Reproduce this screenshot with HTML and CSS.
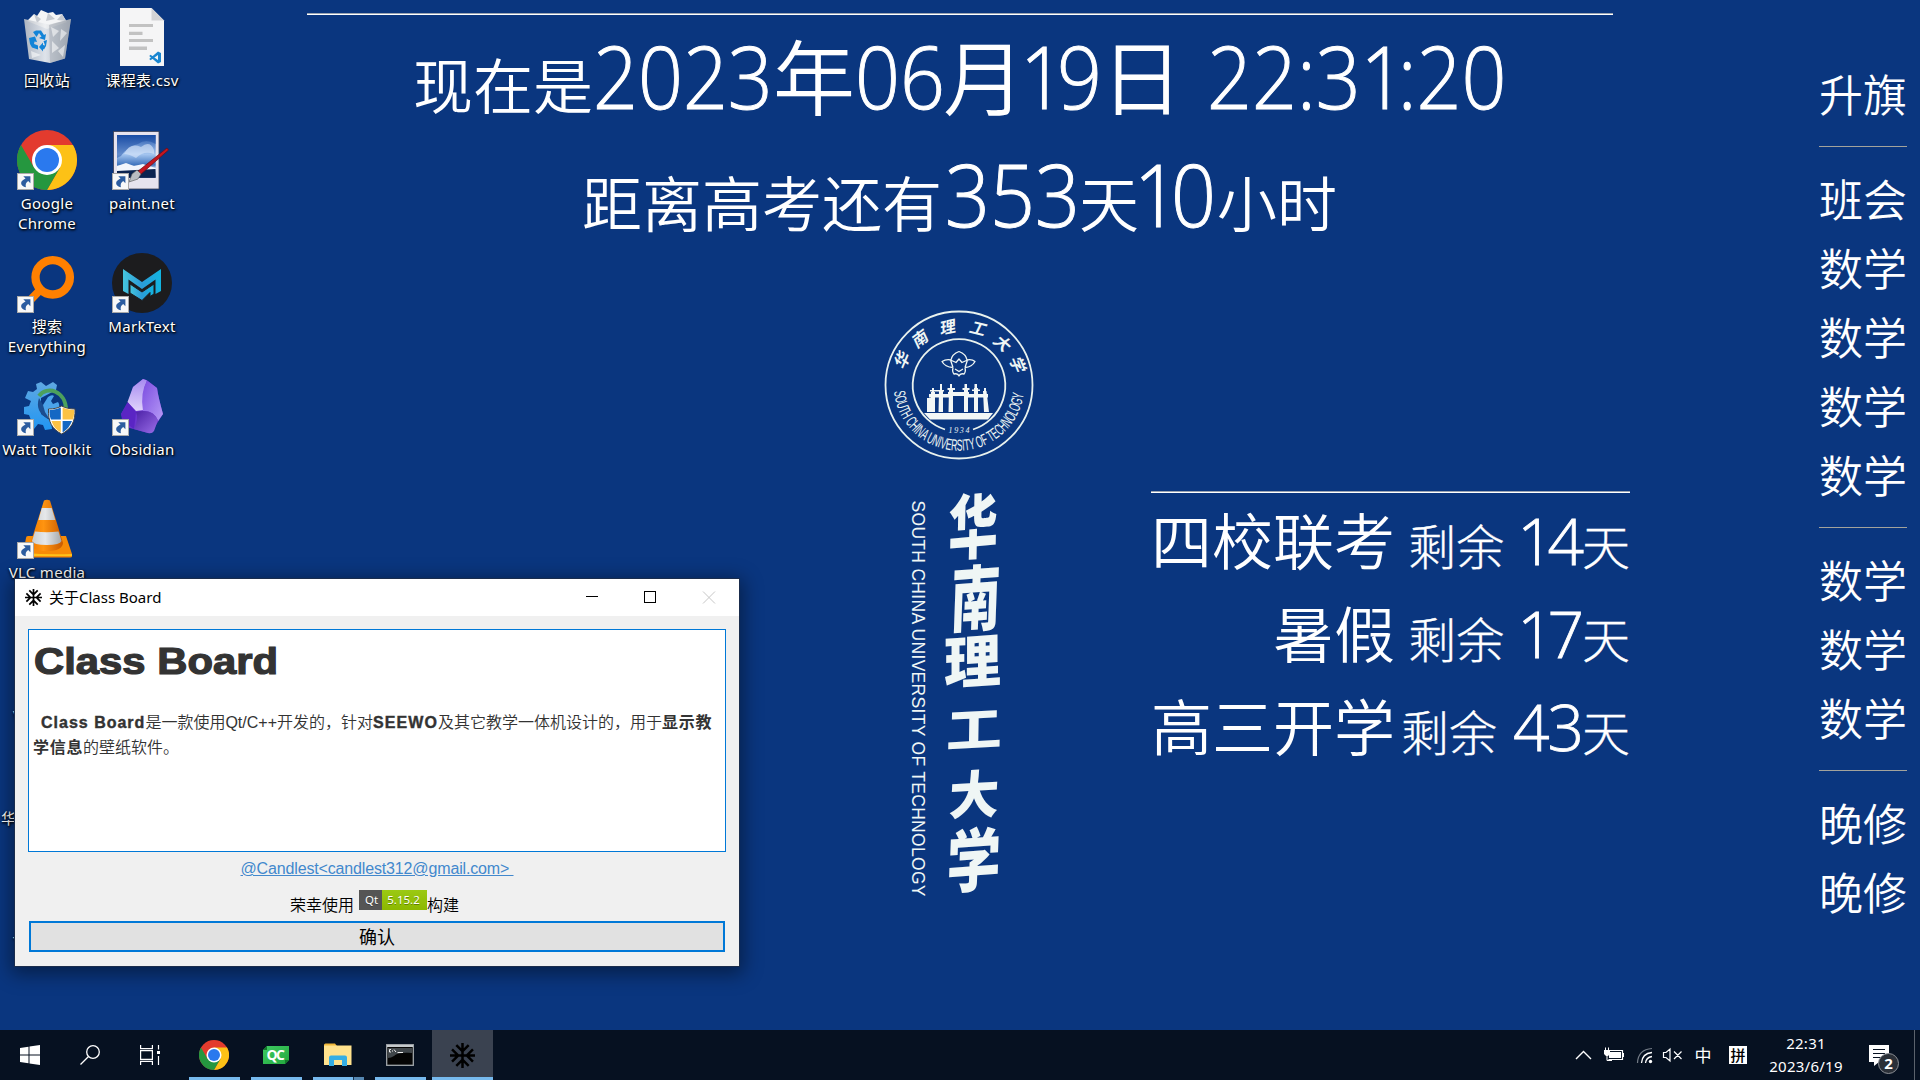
FILE: index.html
```html
<!DOCTYPE html>
<html lang="zh-CN">
<head>
<meta charset="utf-8">
<title>Class Board</title>
<link rel="stylesheet" href="styles.css">
</head>
<body>
<svg class="defs" width="0" height="0" aria-hidden="true">
  <defs>
    <linearGradient id="bin" x1="0" x2="1"><stop offset="0" stop-color="#b9bec6"/><stop offset=".45" stop-color="#eef0f2"/><stop offset="1" stop-color="#a9aeb6"/></linearGradient>
    <linearGradient id="sky" x1="0" y1="0" x2="0" y2="1"><stop offset="0" stop-color="#1c4fa8"/><stop offset=".45" stop-color="#a5c6f0"/><stop offset=".7" stop-color="#3f74bd"/><stop offset=".8" stop-color="#e8eef8"/><stop offset="1" stop-color="#0a2a66"/></linearGradient>
    <linearGradient id="teal" x1="0" x2="1"><stop offset="0" stop-color="#45c5dd"/><stop offset=".5" stop-color="#2b9bd8"/><stop offset="1" stop-color="#12b5e0"/></linearGradient>
    <linearGradient id="gear" x1="0" y1="0" x2="0" y2="1"><stop offset="0" stop-color="#5fa8e2"/><stop offset="1" stop-color="#2196f3"/></linearGradient>
    <linearGradient id="cone" x1="0" x2="1"><stop offset="0" stop-color="#f07a00"/><stop offset=".4" stop-color="#ff9410"/><stop offset="1" stop-color="#c95a00"/></linearGradient>
    <linearGradient id="band" x1="0" x2="1"><stop offset="0" stop-color="#c9cdd0"/><stop offset=".45" stop-color="#e6e8ea"/><stop offset="1" stop-color="#a5a9ac"/></linearGradient>
    <linearGradient id="ob1" x1="0" y1="0" x2="0" y2="1"><stop offset="0" stop-color="#a78bf0"/><stop offset="1" stop-color="#e0d3fb"/></linearGradient>
    <linearGradient id="ob2" x1="0" y1="0" x2="1" y2="1"><stop offset="0" stop-color="#7a4be0"/><stop offset="1" stop-color="#b79bf6"/></linearGradient>
    <linearGradient id="ob3" x1="0" y1="0" x2="1" y2="1"><stop offset="0" stop-color="#4a1fa5"/><stop offset="1" stop-color="#9a6ee8"/></linearGradient>
    <linearGradient id="qt" x1="0" y1="0" x2="1" y2="1"><stop offset="0" stop-color="#3ecb62"/><stop offset="1" stop-color="#23a83e"/></linearGradient>
    <symbol id="shortcut" viewBox="0 0 17 17">
      <rect x=".5" y=".5" width="16" height="16" fill="#f8f8f8" stroke="#a9a9a9"/>
      <path d="M6.300 3.200H13.400V10.200L11.200 8.100C9 9.600 8.200 11.400 8.900 14.200 6.200 13.600 4 12 4.100 9.900 4.300 7.800 6.200 6.800 8.500 5.400Z" fill="#2c5c9f"/>
    </symbol>
    <symbol id="chrome" viewBox="0 0 60 60">
      <circle cx="30" cy="30" r="30" fill="#e33b2e"/>
      <path d="M30 15H56A30 30 0 0 1 30 60L43 37.500Z" fill="#fdc116"/>
      <path d="M4 15A30 30 0 0 0 30 60L43 37.500 30 40 17 37.500Z" fill="#25973f"/>
      <circle cx="30" cy="30" r="15" fill="#fff"/><circle cx="30" cy="30" r="12" fill="#2a79ee"/>
    </symbol>
    <symbol id="flake" viewBox="2 2 20 20">
      <path fill="currentColor" d="M22 11h-4.170l3.240-3.240-1.410-1.420L15 11h-2V9l4.660-4.660-1.420-1.410L13 6.170V2h-2v4.170L7.760 2.930 6.340 4.340 11 9v2H9L4.340 6.340 2.930 7.760 6.170 11H2v2h4.170l-3.240 3.240 1.410 1.420L9 13h2v2l-4.660 4.660 1.420 1.410L11 17.830V22h2v-4.170l3.240 3.240 1.420-1.410L13 15v-2h2l4.660 4.660 1.410-1.420L17.830 13H22z"/>
    </symbol>
  </defs>
</svg>

<div class="screen">
  <main class="desktop">
    <section class="clock">
      <p class="clock-row">
        <span class="word w180">现在是</span><span class="num w180">2023</span><span class="unit w82">年</span><span class="num w88">06</span><span class="unit w77">月</span><span class="num w81"><i>1</i>9</span><span class="unit w106">日</span><span class="num time">22:3<i>1</i>:20</span>
      </p>
      <p class="clock-row second">
        <span class="word w363">距离高考还有</span><span class="num w134">353</span><span class="word w55">天</span><span class="num w83"><i>1</i>0</span><span class="word">小时</span>
      </p>
    </section>

    <svg class="university" width="180" height="610" viewBox="0 0 180 610" fill="none">
      <g stroke="#e9f2ee">
        <circle cx="89" cy="85" r="73.500" stroke-width="1.800"/>
        <path d="M75 129.500A46.300 46.300 0 1 1 103 129.500" stroke-width="1.800"/>
      </g>
      <g class="ring-hanzi">
        <text transform="translate(37 63) rotate(-67) skewX(-12)">华</text>
        <text transform="translate(53 44) rotate(-37) skewX(-12)">南</text>
        <text transform="translate(78 33) rotate(-12) skewX(-12)">理</text>
        <text transform="translate(106 34) rotate(14) skewX(-12)">工</text>
        <text transform="translate(128 47) rotate(42) skewX(-12)">大</text>
        <text transform="translate(142 66) rotate(68) skewX(-12)">学</text>
      </g>
      <path id="ring" d="M24 91.600A65.300 65.300 0 0 0 154 91.600"/>
      <text class="ring-latin"><textPath href="#ring" textLength="190" lengthAdjust="spacingAndGlyphs">SOUTH CHINA UNIVERSITY OF TECHNOLOGY</textPath></text>
      <g stroke="#eef5f2" stroke-width="1.300" stroke-linejoin="round">
        <path d="M81 60Q82 54 89 51.500 96 54 97 60M81 60Q76 59 72 61.500 75 67 83 67.500M97 60Q102 59 105 61.500 102 67 95 67.500M83 67.500Q82 72 84 74 88 73 89 76 90 73 94 74 96 72 95 67.500M83 67.500 80.500 60 86 62.500 89 59 92 62.500 97.500 60 95 67.500M85 69 89 71.500 93 69"/>
      </g>
      <g fill="#f2f7f6">
        <path d="M54 113H123L118 119.500H60Z"/>
        <path d="M61 92H65V112H60ZM69 91H73V112H68.500ZM79 88H83V112H78.500ZM94 88H98V112H94ZM104 88H108V112H104ZM113 91H116.500L119 112H114Z"/>
        <path d="M59 94H83V97.500H59ZM94 94H118V97.500H94ZM78 92H99V96H78ZM60 90H74V91.500H60ZM80 84H82V90H80ZM94.500 84H97V90H94.500ZM104.500 84H107V90H104.500ZM70 84H72V90H70ZM62 88H64V94H62ZM114 88H116V94H114ZM57 98H61V112H57ZM102 89.500H110V91H102ZM77.500 88H85V90H77.500ZM92.500 88H99.500V90H92.500Z"/>
      </g>
      <text class="year" x="78.500" y="132.500" textLength="21">1934</text>
      <text class="brush" transform="translate(78 255) rotate(-5) skewX(-6) scale(.92 1.300)">华</text>
      <text class="brush" transform="translate(80 327) rotate(-4) skewX(-6) scale(.92 1.330)">南</text>
      <text class="brush" transform="translate(74 385) rotate(-4) skewX(-4) scale(1.060 1.060)">理</text>
      <text class="brush" transform="translate(76 448) rotate(-3) skewX(-4) scale(1.030 .86)">工</text>
      <text class="brush" transform="translate(78 515) rotate(-3) skewX(-6) scale(.93 .95)">大</text>
      <text class="brush" transform="translate(76 588) rotate(-4) skewX(-6) scale(1 1.270)">学</text>
      <text class="side-latin" transform="translate(42 200.500) rotate(90)" textLength="396">SOUTH CHINA UNIVERSITY OF TECHNOLOGY</text>
    </svg>

    <section class="exams">
      <p class="exam"><span class="exam-name">四校联考</span><span class="left"><span>剩余</span><b><i>1</i>4</b><span>天</span></span></p>
      <p class="exam"><span class="exam-name">暑假</span><span class="left"><span>剩余</span><b><i>1</i>7</b><span>天</span></span></p>
      <p class="exam"><span class="exam-name">高三开学</span><span class="left"><span>剩余</span><b class="spread">43</b><span>天</span></span></p>
    </section>

    <ol class="lessons">
      <li>升旗</li>
      <li class="break">班会</li><li>数学</li><li>数学</li><li>数学</li><li>数学</li>
      <li class="break">数学</li><li>数学</li><li>数学</li>
      <li class="break">晚修</li><li>晚修</li>
    </ol>

    <div class="icons">
      <figure>
        <svg viewBox="0 0 60 60">
          <path d="M10 14 17 7 20 9 24 3 31 6 36 5 39 8 45 7 50 15 30 22Z" fill="#f4f5f6"/>
          <path d="M17 7 24 12 20 16ZM31 6 29 14 38 12ZM45 7 40 13 49 14Z" fill="#c6cad0"/>
          <path d="M7 12 32 17.500 54 12 48 51.500 33 56 12 52Z" fill="url(#bin)" opacity=".93"/>
          <path d="M32 18 54 12 48 51.500 33 56Z" fill="#9ea4ad" opacity=".45"/>
          <path d="M34 20 42 24 36 30ZM44 22 50 26 43 34ZM35 34 42 41 35 46ZM41 44 48 38 46 50ZM14 44 24 48 15 51Z" fill="#fff" opacity=".55"/>
          <g fill="#1284d8"><path d="M16 25 19 23.500H24L27 28 29 27 28 33 22 31 24.500 29.500 22 26 19.500 30Z"/><path d="M12 31 18 29.500 20 35 17.500 34.500 17 37 21 38.500V42.500L15 40.500 13 37Z"/><path d="M22 40 26 35.500V38L28 38.500 26.500 34 30 33 29 39 27 42.500 26 42V44.500Z"/></g>
        </svg>
        <figcaption>回收站</figcaption>
      </figure>
      <figure>
        <svg viewBox="0 0 60 60"><use href="#chrome" width="60" height="60"/><use href="#shortcut" y="43" width="17" height="17"/></svg>
        <figcaption>Google<br>Chrome</figcaption>
      </figure>
      <figure>
        <svg viewBox="0 0 60 60"><path d="M11 49.500 24 36" stroke="#ff8000" stroke-width="8"/><circle cx="35.700" cy="24.300" r="17.200" fill="none" stroke="#ff8000" stroke-width="8.300"/><use href="#shortcut" y="43" width="17" height="17"/></svg>
        <figcaption>搜索<br>Everything</figcaption>
      </figure>
      <figure>
        <svg viewBox="0 0 60 60">
          <path d="M24 6 29 10 36 6 40 9 39 14 24 22 24 38 34 45 35 53 28 54 26 49 21 48 17 53 12 50 14 44 12 39 7 38 7 31 12 30 14 25 8 22 11 15 16 16 20 13 19 8Z" fill="url(#gear)"/>
          <path d="M22 20C30 9 49 15 49 34" fill="none" stroke="#4ca05c" stroke-width="4"/>
          <path d="M22 22C19 31 22 38 31 43 L31 34 26 29Z" fill="#1b4d8f"/>
          <path d="M26 29 31 21Q35 18 37 20L34 25 36 28 41 26Q44 30 40 34L36 36 33 44 28 36Z" fill="#4ba3ea"/>
          <path d="M31.500 33C37 33 41 32 44.700 30 48 32 53 33 58 33 58.500 46 54 53 44.700 58 35 53 31 46 31.500 33Z" fill="#fff" stroke="#444" stroke-width="1"/>
          <path d="M32.500 34C37 34 40 33 43.800 31.500V43.500H34C32.500 40 32.300 37 32.500 34ZM45.600 45H55C53 50 50 54 45.600 56.500Z" fill="#1568c4"/>
          <path d="M45.600 31.500C49 33 53 34 57 34 57.200 37 57 40 56 43.500H45.600ZM43.800 45H34.500C36 50 39 54 43.800 56.500Z" fill="#fcc244"/>
          <use href="#shortcut" y="43" width="17" height="17"/></svg>
        <figcaption class="loose">Watt Toolkit</figcaption>
      </figure>
      <figure>
        <svg viewBox="0 0 60 60">
          <path d="M11 37H49L55 55V57.500Q55 58.500 53 58.500H8Q5 58.500 6 55L9 39Q9 37 11 37Z" fill="#f78b07"/><path d="M8 54Q30 56 55 55V57H8Z" fill="#ffc21a"/>
          <path d="M27 1.500Q30 .2 33 1.500L46 44Q45 52 30 52 14 52 13.500 44Z" fill="url(#cone)"/>
          <path d="M24.800 9H34.700L38.300 21H21.500ZM18 32.500Q30 34 41.500 32.500L44.500 42Q43 46 30 46 16 46 15 42Z" fill="url(#band)"/>
          <use href="#shortcut" y="43" width="17" height="17"/></svg>
        <figcaption>VLC media</figcaption>
      </figure>
      <figure class="covered"><figcaption class="second-line">V</figcaption></figure>
      <figure class="covered"><figcaption class="flush">华</figcaption></figure>
      <figure class="covered"><figcaption class="inset">T</figcaption></figure>

      <figure>
        <svg viewBox="0 0 60 60"><path d="M8 1H39.500L52 13.500V59H8Z" fill="#f5f5f6"/><path d="M39.500 1 52 13.500H39.500Z" fill="#d3d3d5"/><path d="M17 17H41V20H17ZM17 24.700H30.500V28H17ZM17 32H41V35H17ZM17 39.500H35V43H17Z" fill="#c2c2c2"/><path d="M46 44.500 49 46V55L46 56.500 37.200 49 38.600 47.700 46 53V48L38.600 53.200 37.200 52Z" fill="#1a86d0"/></svg>
        <figcaption>课程表.csv</figcaption>
      </figure>
      <figure>
        <svg viewBox="0 0 60 60"><rect x="1.500" y="1.500" width="45.500" height="57.500" fill="#e7e3ee" stroke="#3a3f55" stroke-width=".8"/><rect x="5" y="5" width="38.700" height="42.700" fill="url(#sky)"/><path d="M5 5H43.700V14Q34 8 26 14 16 16 9 26L5 28Z" fill="#1547a0" opacity=".45"/><path d="M12 24Q18 12 29 17 38 10 42 20V24Q32 20 24 28 17 24 12 24Z" fill="#dbe8fa" opacity=".6"/><path d="M5 36 14 33 22 36 31 34 43.500 38V40L5 42Z" fill="#f2f6fc"/><path d="M5 41 43.500 39V47.700H5Z" fill="#0b2350"/><path d="M25 42 55 18 56.500 20 28 45Z" fill="#c4161f" stroke="#6d0c12" stroke-width=".7"/><path d="M20 44 25 40 29 44 26 49 17 52Z" fill="#b9bcc2" stroke="#555" stroke-width=".6"/><use href="#shortcut" y="43" width="17" height="17"/></svg>
        <figcaption>paint.net</figcaption>
      </figure>
      <figure>
        <svg viewBox="0 0 60 60"><circle cx="30" cy="30" r="30" fill="#1c1c1e"/><path d="M11 16 30 29 49 16V38L43.500 41V26.500L30 36 16.500 26.500V41L11 38Z" fill="url(#teal)"/><path d="M18 31 30 39 42 31V41L38 43.500V39.500L30 47.500 18 40Z" fill="url(#teal)" stroke="#1c1c1e"/><use href="#shortcut" y="43" width="17" height="17"/></svg>
        <figcaption>MarkText</figcaption>
      </figure>
      <figure>
        <svg viewBox="0 0 60 60"><path d="M31 3Q33 3 36 5L45 12Q46 20 51 38L44 49Q40 58 36 57L14 51 9 38 17 25 21 11Z" fill="#6b35cf"/><path d="M31 3 35 4.500Q29 18 32 34L24 35 15.500 26 21 11Z" fill="url(#ob1)"/><path d="M35 4.500 45 12Q46 20 51 38L46 45Q42 34 31 35 28 17 35 4.500Z" fill="url(#ob2)"/><path d="M15.500 26 24 36 22 53 10 44 9 38Z" fill="#5a25c4"/><path d="M24 36Q40 32 46 44L42 55Q40 58 36 57L22 53Q27 43 24 36Z" fill="url(#ob3)"/><use href="#shortcut" y="43" width="17" height="17"/></svg>
        <figcaption>Obsidian</figcaption>
      </figure>
    </div>

    <section class="dialog">
      <header class="titlebar">
        <svg class="title-icon"><use href="#flake"/></svg>
        <h1>关于Class Board</h1>
        <svg class="winbtns" width="130" height="13" viewBox="0 0 130 13" fill="none" shape-rendering="crispEdges"><path d="M0 5.500H12M58.500.5H69.500V11.500H58.500Z" stroke="#000"/><path d="M117 .5 129 12.500M129 .5 117 12.500" stroke="#c6c6c6" shape-rendering="auto"/></svg>
      </header>
      <article class="about">
        <h2>Class Board</h2>
        <p><strong class="latin">Class Board</strong>是一款使用<span class="qt-cpp">Qt/C++</span>开发的，针对<strong class="latin">SEEWO</strong>及其它教学一体机设计的，用于<strong>显示教<br>学信息</strong>的壁纸软件。</p>
      </article>
      <p class="author"><a>@Candlest&lt;candlest312@gmail.com&gt;&nbsp;</a></p>
      <p class="built">荣幸使用<span class="badge"><i>Qt</i><i class="version">5.15.2</i></span>构建</p>
      <button class="ok">确认</button>
    </section>
  </main>

  <footer class="taskbar">
    <nav class="tasks">
      <span class="task flat"><svg width="20" height="20" viewBox="0 0 20 20"><path d="M0 3 8.500 1.800V9.500H0ZM9.500 1.600 20 0V9.500H9.500ZM0 10.500H8.500V18.200L0 17ZM9.500 10.500H20V20L9.500 18.400Z" fill="#fff"/></svg></span>
      <span class="task flat"><svg width="20" height="20" viewBox="0 0 20 20" fill="none" stroke="#fff" stroke-width="1.300"><circle cx="13" cy="7" r="6.300"/><path d="M8.500 11.500.5 19.500"/></svg></span>
      <span class="task flat"><svg width="20" height="20" viewBox="0 0 20 20" fill="none" stroke="#fff" stroke-width="1.200"><path d="M.6 0V3.600H12.400V0M.6 20V16.400H12.400V20M.6 5.600H12.400V14.400H.6ZM18.500 0V4.500M18.500 11V20"/><path d="M17 6H20V9H17Z" fill="#fff" stroke="none"/></svg></span>
      <span class="task first running"><svg width="30" height="30"><use href="#chrome" width="30" height="30"/></svg></span>
      <span class="task running"><svg width="26" height="18" viewBox="0 0 26 18"><path d="M4 0H26V14L22 18H0V4Z" fill="url(#qt)"/><path d="M0 4 4 0V4ZM22 18V14H26Z" fill="#12782a"/><text class="qc" x="3.500" y="14" textLength="18.500">QC</text></svg></span>
      <span class="task running grouped"><svg width="28" height="24" viewBox="0 0 28 24"><path d="M0 2Q0 .5 1.500 .5H11L13 3H0Z" fill="#f0b83a"/><path d="M0 2.500H27.500V22H0Z" fill="#ffe28d"/><path d="M5 23V14.500Q5 12.500 7 12.500H21Q23 12.500 23 14.500V23H18V17H10V23Z" fill="#35aee4"/></svg></span>
      <span class="task running"><svg width="28" height="22" viewBox="0 0 28 22"><rect x=".7" y=".7" width="26.600" height="20.600" fill="#050505" stroke="#a2a8ac" stroke-width="1.300"/><path d="M1 1H27V3H1Z" fill="#c4c9cc"/><path d="M2 4H26V9Q12 8 8 12 5 14 2 14Z" fill="#40464a"/><path d="M5 5.500H3.500V8H5M6.500 6V6.500M6.500 7.500V8M8 5.500 10 8M11.500 8.500H17" stroke="#eee" fill="none"/></svg></span>
      <span class="task running active"><svg width="25" height="25"><use href="#flake" width="25" height="25"/></svg></span>
    </nav>
    <div class="tray">
      <svg width="111" height="24" viewBox="0 0 111 24" fill="none" stroke="#fff">
        <path d="M1 16 8.500 8.500 16 16" stroke-width="1.400"/>
        <path d="M34 7.500H47.500V16.500H33.500" stroke-width="1.200"/><path d="M34 9H46V15H34ZM47.500 10H49V14H47.500ZM29 7H35V11L33 13H31L29 11Z" fill="#fff" stroke="none"/><path d="M30.500 4.500V8M33.500 4.500V8M32 12V17.500H37"/>
        <path d="M62.500 20Q63 6.500 77 5.500" stroke="#747c87" stroke-width="1.200"/><path d="M66.500 20Q67 10.500 77 9.500M70.500 20Q71 14.500 77 13.500" stroke-width="1.300"/><circle cx="75.500" cy="18.500" r="1.700" fill="#fff" stroke="none"/>
        <path d="M88.500 9.500H91L95 6V18L91 14.500H88.500ZM99 8.500 106.500 16M106.500 8.500 99 16" stroke-width="1.200"/>
      </svg>
      <span class="ime">中</span>
      <span class="pinyin">拼</span>
      <time class="datetime">22:31<br>2023/6/19</time>
      <span class="notice"><svg width="20" height="22" viewBox="0 0 20 22"><path d="M0 0H20V17H10L5 21V17H0Z" fill="#fff"/><path d="M4 4.500H16M4 8.500H16M4 12.500H12" stroke="#061121" stroke-width="1.200"/></svg><em>2</em></span>
      <span class="peek"></span>
    </div>
  </footer>
</div>
</body>
</html>
```
FILE: styles.css
```css
* { box-sizing: border-box; }
body { margin: 0; overflow: hidden; font-family: "Open Sans", "Noto Sans CJK SC", sans-serif; }
p, h1, h2, ol, figure { margin: 0; padding: 0; }
.defs { position: absolute; }

.screen { width: 1920px; height: 1080px; display: grid; grid-template-rows: 1030px 50px; background: #0a367f; color: #fff; }
.desktop { position: relative; display: grid; grid-template: 1030px / 1920px; overflow: hidden; }
.desktop > * { grid-area: 1 / 1; }

/* Clock */
.clock { justify-self: center; align-self: start; width: 1306px; margin-top: 13px; border-top: 1px solid #9aa3b0; box-shadow: inset 0 1px #fff; display: flex; flex-direction: column; align-items: flex-start; font-weight: 300; }
.clock-row { display: flex; align-items: baseline; height: 120px; line-height: 119px; padding-left: 106px; white-space: nowrap; }
.clock-row.second { padding-left: 275px; }
.word { font: 350 60px/119px "Noto Sans CJK SC", sans-serif; }
.unit { font: 350 82px/119px "Noto Sans CJK SC", sans-serif; }
.num { font-size: 87px; -webkit-text-stroke: 1px #fff; transform: scaleX(.905); transform-origin: 0 0; }
.num i, .left i { font-style: normal; letter-spacing: -.1em; }
.w180 { width: 180px; }
.w82 { width: 82px; }
.w88 { width: 88px; }
.w77 { width: 77px; }
.w81 { width: 81px; }
.w106 { width: 106px; }
.w363 { width: 363px; }
.w134 { width: 134px; }
.w55 { width: 55px; }
.w83 { width: 83px; }

/* University */
.university { justify-self: start; align-self: start; margin: 300px 0 0 870px; }
.university text { fill: #eff6f5; }
.ring-hanzi { font: 700 16px "Noto Sans CJK SC", sans-serif; text-anchor: middle; }
.ring-latin { font: 16px "Liberation Sans", sans-serif; }
.year { font: italic 8px "Liberation Serif", serif; }
.brush { font: 800 54px "Noto Sans CJK SC", sans-serif; }
.side-latin { font: 17.500px "Liberation Sans", sans-serif; }

/* Exams */
.exams { justify-self: start; align-self: start; width: 479px; margin: 491px 0 0 1151px; border-top: 1px solid #9aa3b0; box-shadow: inset 0 1px #fff; }
.exam { display: grid; grid-template-columns: 244px 1fr; align-items: baseline; height: 93px; line-height: 93px; text-align: right; white-space: nowrap; }
.exam-name { font: 350 61px/93px "Noto Sans CJK SC", sans-serif; }
.left { display: flex; justify-content: flex-end; align-items: baseline; font: 300 48px/93px "Noto Sans CJK SC", sans-serif; -webkit-text-stroke: .3px #fff; }
.left b { font: 300 64px/93px "Open Sans", sans-serif; letter-spacing: -2px; margin-left: 13px; -webkit-text-stroke: .8px #fff; }
.left .spread { margin-left: 16px; }

/* Lessons */
.lessons { justify-self: end; align-self: start; list-style: none; margin: 59px 13px 0 0; width: 88px; font: 350 44px/69px "Noto Sans CJK SC", sans-serif; text-align: center; white-space: nowrap; }
.lessons li { height: 69px; }
.break { position: relative; margin-top: 36px; }
.break::before { content: ""; position: absolute; left: 0; right: 0; top: -18px; height: 1px; background: #a3a39c; }

/* Desktop icons */
.icons { display: grid; grid-template-rows: repeat(8, 123px); grid-auto-columns: 94px; grid-auto-flow: column; column-gap: 1px; justify-content: start; padding-top: 7px; font: 15px/20px "Noto Sans", "Noto Sans CJK SC", sans-serif; letter-spacing: .3px; text-align: center; }
.icons figure { display: flex; flex-direction: column; align-items: center; gap: 3px; }
.icons svg { width: 60px; height: 60px; }
.icons figcaption { white-space: nowrap; text-shadow: 1px 1px 2px #000, 0 1px 3px #000; }
.icons .loose { letter-spacing: .5px; }
.icons .covered { align-items: flex-start; padding-top: 63px; }
.icons .second-line { padding: 20px 0 0 13px; }
.icons .flush { padding-left: 1px; }
.icons .inset { padding-left: 13px; }

/* Dialog window */
.dialog { position: absolute; left: 15px; top: 579px; width: 724px; height: 387px; background: #f0f0f0; color: #000; outline: 1px solid #1a2c4c; box-shadow: 0 4px 18px 4px rgba(0, 0, 0, .42); display: flex; flex-direction: column; }
.titlebar { height: 37px; background: #fff; display: flex; align-items: center; padding: 0 23px 0 10px; }
.title-icon { width: 17px; height: 17px; }
.titlebar h1 { flex: 1; margin-left: 7px; font: 15px/37px "Noto Sans", "Noto Sans CJK SC", sans-serif; }
.about { height: 223px; margin: 13px 13px 0; background: #fff; border: 1px solid #0078d7; padding: 7px 4px; color: #333; white-space: nowrap; }
.about h2 { font: bold 37px/50px "Liberation Sans", sans-serif; -webkit-text-stroke: 1.200px #333; transform: scaleX(1.130); transform-origin: 0 0; margin-left: 1px; }
.about p { margin-top: 23px; font: 350 16px/25px "Liberation Sans", "Noto Sans CJK SC", sans-serif; }
.about strong { font-weight: 700; letter-spacing: .7px; }
.about .latin { -webkit-text-stroke: .4px #333; letter-spacing: 1.100px; }
.about p > .latin:first-child { margin-left: 8px; letter-spacing: 1px; }
.author { height: 32px; text-align: center; font: 16px/34px "Liberation Sans", sans-serif; letter-spacing: -.15px; }
.author a { color: #4288cd; text-decoration: underline; }
.built { height: 37px; display: flex; justify-content: center; align-items: center; padding: 2px 5px 0 0; font: 350 16px/32px "Noto Sans CJK SC", sans-serif; }
.badge { display: flex; height: 20px; margin: -7px 0 0 5px; font: 11.500px/20px "Noto Sans", sans-serif; color: #fff; background: #555; text-shadow: 0 1px #0005; }
.badge i { font-style: normal; width: 23px; padding-left: 2px; text-align: center; }
.badge .version { width: 45px; padding: 0 2px 0 0; background: linear-gradient(#9bc913, #8cb800); }
.ok { height: 31px; margin: 0 14px; border: 2px solid #0078d7; background: #e1e1e1; padding: 0; color: #000; font: 18px/27px "Noto Sans CJK SC", sans-serif; }

/* Taskbar */
.taskbar { background: #061121; display: flex; justify-content: space-between; }
.tasks { display: flex; }
.task { position: relative; width: 62px; height: 50px; display: flex; align-items: center; justify-content: center; }
.task.flat { width: 60px; }
.task.first { margin-left: 3px; }
.running::after { content: ""; position: absolute; left: 6px; right: 5px; bottom: 0; height: 3px; background: #76b9ed; }
.grouped::after { background: linear-gradient(90deg, #76b9ed 40px, #17304b 40px, #17304b 41px, #5587b2 41px); }
.task.active { width: 61px; margin-left: 1px; background: #3a4250; color: #000; }
.active::after { left: 0; right: 0; }
.qc { font: 700 14px "Open Sans", sans-serif; fill: #fff; }
.tray { display: flex; align-items: center; font: 15px/23px "Noto Sans", "Noto Sans CJK SC", sans-serif; }
.ime { font-size: 17px; margin-left: 8px; width: 18px; text-align: center; }
.pinyin { margin-left: 17px; width: 18px; height: 18px; background: #fff; color: #000; font: 500 15px/18px "Noto Sans CJK SC", sans-serif; text-align: center; }
.datetime { width: 118px; text-align: center; letter-spacing: .25px; }
.notice { position: relative; height: 22px; margin: 1px 25px 0 4px; display: flex; }
.notice em { position: absolute; left: 9px; top: 8px; width: 21px; height: 21px; border: 1px solid #8b8f95; border-radius: 50%; background: #2b3038; font: 700 15px/19px "Noto Sans", sans-serif; text-align: center; }
.peek { width: 6px; height: 50px; border-left: 1px solid #5b626c; }
```
